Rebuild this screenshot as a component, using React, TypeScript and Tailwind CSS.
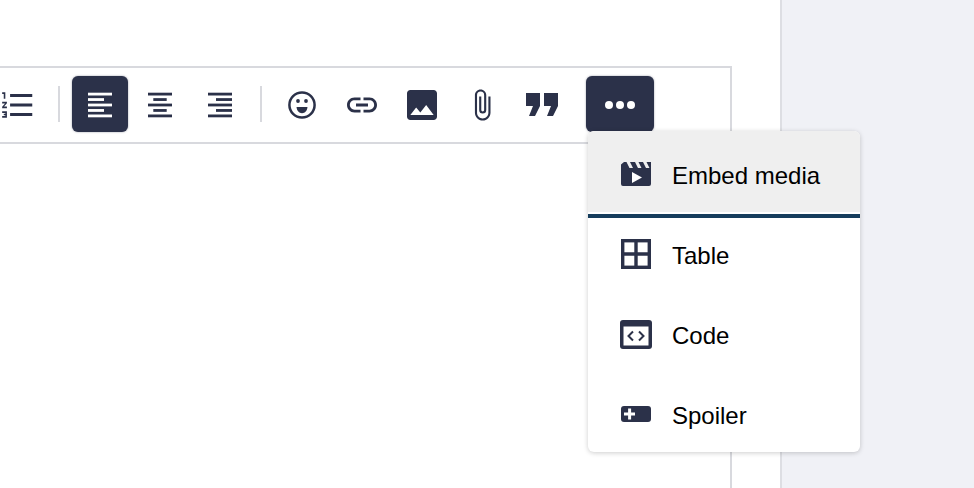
import type { ReactNode } from 'react'
import { MdFormatListNumbered, MdLink, MdImage, MdAttachFile } from 'react-icons/md'

const DARK = '#2b3149'

const AlignIcon = ({ rows, color }: { rows: [number, number][]; color: string }): JSX.Element => (
  <svg width="24" height="26" viewBox="0 0 24 26" fill={color}>
    {rows.map(([x, w], i) => (
      <rect key={i} x={x} y={0.7 + i * 5.45} width={w} height="2.8" />
    ))}
  </svg>
)

const ToolButton = ({ children, active }: { children: ReactNode; active?: boolean }): JSX.Element => (
  <button
    className={
      active
        ? 'flex h-14 w-14 items-center justify-center rounded-md bg-[#2b3149] pt-0.5 shadow-[0_0_2px_rgba(43,49,73,0.5)]'
        : 'flex h-14 w-14 items-center justify-center rounded-md pt-0.5 text-[#2b3149]'
    }
  >
    {children}
  </button>
)

const Separator = (): JSX.Element => <div className="mx-3 mt-[10px] h-9 w-[2px] bg-[#d8d9de]" />

const MenuItem = ({ icon, label, className }: { icon: ReactNode; label: string; className?: string }): JSX.Element => (
  <div className={`flex items-center pl-8 ${className ?? ''}`}>
    <div className="mb-1 flex h-8 w-8 items-center justify-center text-[#2b3149]">{icon}</div>
    <span className="ml-5 text-2xl leading-none text-black">{label}</span>
  </div>
)

const MoreMenu = (): JSX.Element => (
  <div className="absolute left-[2px] top-[55px] z-10 h-[321px] w-[272px] rounded-md bg-white shadow-[0_1px_5px_rgba(0,0,0,0.2)]">
    <MenuItem
      className="h-[81px] rounded-t-md bg-[#efefef] pt-[8px]"
      label="Embed media"
      icon={
        <svg width="30" height="24" viewBox="0 0 30 24">
          <path
            fill={DARK}
            d="M0 2.5 L3 0 L5.5 0 L8.5 6 L12 6 L9 0 L14 0 L17 6 L20.5 6 L17.5 0 L22 0 L25 6 L28.5 6 L25.5 0 L30 0 L30 22 Q30 24 28 24 L2 24 Q0 24 0 22 Z"
          />
          <path fill="#fff" d="M11 10 L21 15.5 L11 21 Z" />
        </svg>
      }
    />
    <div className="mt-[2px] h-1 bg-[#163d5c]" />
    <MenuItem
      className="h-[76px]"
      label="Table"
      icon={
        <svg width="30" height="30" viewBox="0 0 30 30" fill="none" stroke={DARK} strokeWidth="3.4">
          <rect x="1.7" y="1.7" width="26.6" height="26.6" />
          <path d="M15 1.7V28.3M1.7 15H28.3" />
        </svg>
      }
    />
    <MenuItem
      className="h-[84px]"
      label="Code"
      icon={
        <svg width="32" height="29" viewBox="0 0 32 29">
          <rect width="32" height="29" rx="3" fill={DARK} />
          <rect x="3.5" y="6.5" width="25" height="19" fill="#fff" />
          <path d="M13 11.5L8.5 16L13 20.5M19 11.5L23.5 16L19 20.5" fill="none" stroke={DARK} strokeWidth="2" />
        </svg>
      }
    />
    <MenuItem
      className="h-[74px] pt-[2px]"
      label="Spoiler"
      icon={
        <svg width="30" height="16" viewBox="0 0 30 16">
          <rect width="30" height="16" rx="3" fill={DARK} />
          <path d="M8.6 2.5V13.5M3 8H14" stroke="#fff" strokeWidth="3" />
        </svg>
      }
    />
  </div>
)

const App = (): JSX.Element => (
  <div className="flex h-[488px] overflow-hidden bg-[#f0f1f6] font-['Liberation_Sans',sans-serif]">
    <main className="h-full w-[782px] shrink-0 border-r-2 border-[#dddee3] bg-white pt-[66px]">
      <div className="-ml-5 h-full w-[752px] border-2 border-b-0 border-[#d8d9de]">
        <div className="flex h-[76px] border-b-2 border-[#d8d9de] pl-2 pt-2">
          <ToolButton>
            <MdFormatListNumbered size={38} />
          </ToolButton>
          <Separator />
          <div className="flex gap-1">
            <ToolButton active>
              <AlignIcon
                color="#fff"
                rows={[
                  [0, 24],
                  [0, 16],
                  [0, 24],
                  [0, 16],
                  [0, 24],
                ]}
              />
            </ToolButton>
            <ToolButton>
              <AlignIcon
                color={DARK}
                rows={[
                  [0, 24],
                  [5.3, 13.4],
                  [0, 24],
                  [5.3, 13.4],
                  [0, 24],
                ]}
              />
            </ToolButton>
            <ToolButton>
              <AlignIcon
                color={DARK}
                rows={[
                  [0, 24],
                  [8, 16],
                  [0, 24],
                  [8, 16],
                  [0, 24],
                ]}
              />
            </ToolButton>
          </div>
          <Separator />
          <div className="flex gap-1">
            <ToolButton>
              <svg width="28" height="28" viewBox="0 0 28 28" fill={DARK}>
                <circle cx="14" cy="14" r="12.6" fill="none" stroke={DARK} strokeWidth="2.5" />
                <circle cx="10" cy="10" r="1.9" />
                <circle cx="18" cy="10" r="1.9" />
                <path d="M8.5 16H19.5C19 20 17 22.2 14 22.2C11 22.2 9 20 8.5 16Z" />
              </svg>
            </ToolButton>
            <ToolButton>
              <MdLink size={36} />
            </ToolButton>
            <ToolButton>
              <MdImage size={40} />
            </ToolButton>
            <ToolButton>
              <MdAttachFile size={34} />
            </ToolButton>
            <ToolButton>
              <svg width="32" height="24" viewBox="0 0 32 24" fill={DARK}>
                <path d="M0 0H14V13L9 23H3L7 13H0Z" />
                <path d="M18 0H32V13L27 23H21L25 13H18Z" />
              </svg>
            </ToolButton>
          </div>
          <div className="relative ml-4">
            <button className="flex h-14 w-[68px] items-center justify-center rounded-md bg-[#2b3149] pt-0.5 shadow-[0_0_2px_rgba(43,49,73,0.5)]">
              <svg width="30" height="8" viewBox="0 0 30 8" fill="#fff">
                <circle cx="4" cy="4" r="4" />
                <circle cx="15" cy="4" r="4" />
                <circle cx="26" cy="4" r="4" />
              </svg>
            </button>
            <MoreMenu />
          </div>
        </div>
      </div>
    </main>
  </div>
)

export default App
